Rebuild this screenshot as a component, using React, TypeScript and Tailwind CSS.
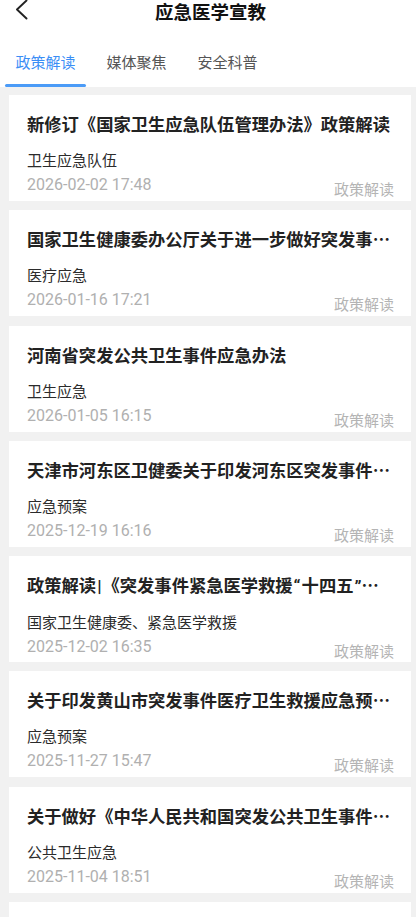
import { useState } from 'react'

interface Article {
  title: string
  source: string
  time: string
}

const articles: Article[] = [
  { title: '新修订《国家卫生应急队伍管理办法》政策解读', source: '卫生应急队伍', time: '2026-02-02 17:48' },
  { title: '国家卫生健康委办公厅关于进一步做好突发事件医疗应急工作的通知', source: '医疗应急', time: '2026-01-16 17:21' },
  { title: '河南省突发公共卫生事件应急办法', source: '卫生应急', time: '2026-01-05 16:15' },
  { title: '天津市河东区卫健委关于印发河东区突发事件医疗卫生救援应急预案的通知', source: '应急预案', time: '2025-12-19 16:16' },
  { title: '政策解读|《突发事件紧急医学救援“十四五”规划》', source: '国家卫生健康委、紧急医学救援', time: '2025-12-02 16:35' },
  { title: '关于印发黄山市突发事件医疗卫生救援应急预案的通知', source: '应急预案', time: '2025-11-27 15:47' },
  { title: '关于做好《中华人民共和国突发公共卫生事件应对法》贯彻实施工作的通知', source: '公共卫生应急', time: '2025-11-04 18:51' },
  { title: '突发事件紧急医学救援工作指引', source: '紧急医学救援', time: '2025-10-20 10:12' },
]

const tabs = ['政策解读', '媒体聚焦', '安全科普']

const cjk = { fontFamily: '"Noto Sans CJK SC", "Noto Sans", sans-serif' }
const num = { fontFamily: 'Roboto, "Noto Sans CJK SC", sans-serif' }

// curly quotes and the bar are narrow in the reference, so set them in a latin face
function Title({ text }: { text: string }) {
  const parts = text.split(/([“”|])/)
  return (
    <>
      {parts.map((p, i) =>
        p === '“' || p === '”' || p === '|' ? (
          <span key={i} className="px-[1px]" style={num}>
            {p}
          </span>
        ) : (
          p
        )
      )}
    </>
  )
}

function ArticleCard({ item }: { item: Article }) {
  return (
    <div className="ml-[9px] mr-[5px] h-[106px] shrink-0 bg-white pl-[18px] pr-[17px] pt-[17px]">
      <div className="truncate pr-px text-[17.3px] font-bold leading-[24px] text-[#222]" style={cjk}>
        <Title text={item.title} />
      </div>
      <div className="mt-[13px] text-[15px] leading-[22px] text-[#2b2b2b]" style={cjk}>
        {item.source}
      </div>
      <div className="mt-[3px] flex items-start justify-between">
        <span className="text-[16px] leading-[22px] text-[#b0b0b0]" style={num}>
          {item.time}
        </span>
        <span className="mt-[4px] text-[15px] leading-[22px] text-[#b4b4b4]" style={cjk}>
          政策解读
        </span>
      </div>
    </div>
  )
}

export default function App() {
  const [active, setActive] = useState(0)

  return (
    <div className="flex h-[917px] w-[416px] flex-col overflow-hidden bg-white" style={cjk}>
      <div className="grid h-[22px] grid-cols-[1fr_auto_1fr] items-center">
        <button className="flex h-[22px] w-[40px] items-start pl-[14px]">
          <svg width="16" height="20" viewBox="0 0 16 20" fill="none">
            <path d="M12.5 0.5 L3 9.5 L12.5 18.5" stroke="#222" strokeWidth="1.9" strokeLinecap="round" strokeLinejoin="round" />
          </svg>
        </button>
        <h1 className="pl-[5px] text-[18.5px] font-bold leading-[22px] text-[#111]">应急医学宣教</h1>
        <div />
      </div>

      <div className="flex gap-[10px] pl-[5px] pt-[29px]">
        {tabs.map((t, i) => (
          <button key={t} onClick={() => setActive(i)} className="flex w-[81px] flex-col items-center">
            <span className={`text-[15px] leading-[21px] ${active === i ? 'text-[#3a8ef6]' : 'text-[#555]'}`}>{t}</span>
            <span className={`mt-[12px] h-[3px] w-full rounded-full ${active === i ? 'bg-[#4b9bf7]' : 'bg-transparent'}`} />
          </button>
        ))}
      </div>

      <div className="flex flex-1 flex-col gap-[9.3px] bg-[#f1f1f1] pt-[8px]">
        {articles.map((a) => (
          <ArticleCard key={a.time} item={a} />
        ))}
      </div>
    </div>
  )
}
